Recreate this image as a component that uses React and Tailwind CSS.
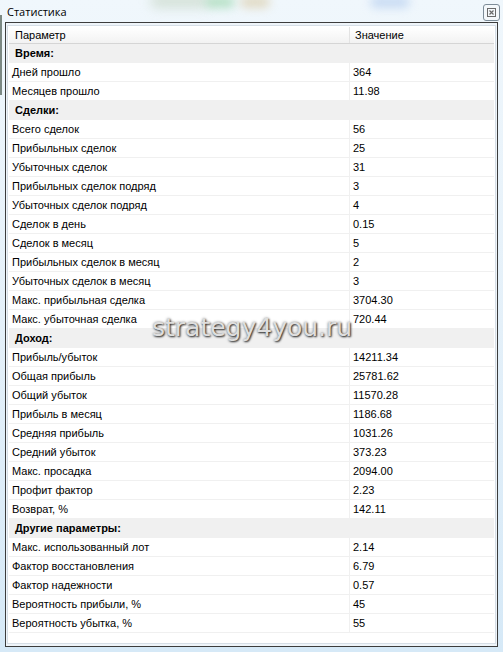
import React from "react";

const sections = [
  {
    title: "Время:",
    rows: [
      ["Дней прошло", "364"],
      ["Месяцев прошло", "11.98"],
    ],
  },
  {
    title: "Сделки:",
    rows: [
      ["Всего сделок", "56"],
      ["Прибыльных сделок", "25"],
      ["Убыточных сделок", "31"],
      ["Прибыльных сделок подряд", "3"],
      ["Убыточных сделок подряд", "4"],
      ["Сделок в день", "0.15"],
      ["Сделок в месяц", "5"],
      ["Прибыльных сделок в месяц", "2"],
      ["Убыточных сделок в месяц", "3"],
      ["Макс. прибыльная сделка", "3704.30"],
      ["Макс. убыточная сделка", "720.44"],
    ],
  },
  {
    title: "Доход:",
    rows: [
      ["Прибыль/убыток", "14211.34"],
      ["Общая прибыль", "25781.62"],
      ["Общий убыток", "11570.28"],
      ["Прибыль в месяц", "1186.68"],
      ["Средняя прибыль", "1031.26"],
      ["Средний убыток", "373.23"],
      ["Макс. просадка", "2094.00"],
      ["Профит фактор", "2.23"],
      ["Возврат, %", "142.11"],
    ],
  },
  {
    title: "Другие параметры:",
    rows: [
      ["Макс. использованный лот", "2.14"],
      ["Фактор восстановления", "6.79"],
      ["Фактор надежности", "0.57"],
      ["Вероятность прибыли, %", "45"],
      ["Вероятность убытка, %", "55"],
    ],
  },
];

function CloseIcon() {
  return (
    <svg width="9" height="9" viewBox="0 0 9 9" fill="none">
      <rect x="0.5" y="0.5" width="8" height="8" stroke="#6a6a6a" strokeWidth="1" />
      <path d="M2.5 2.5 L6.5 6.5 M6.5 2.5 L2.5 6.5" stroke="#6a6a6a" strokeWidth="1.2" />
    </svg>
  );
}

export default function App() {
  return (
    <div
      className="relative w-[503px] h-[652px] overflow-hidden bg-gradient-to-b from-[#f0f7fc] via-[#e4f0f9] to-[#d6e9f7] text-black"
      style={{ fontFamily: '"Liberation Sans", Arial, sans-serif' }}
    >
      {/* blurred background blobs (aero glass) */}
      <div className="pointer-events-none absolute left-[150px] top-[-6px] w-[60px] h-[14px] rounded-full bg-[#c8d8c8] blur-[6px] opacity-70" />
      <div className="pointer-events-none absolute left-[205px] top-[-4px] w-[30px] h-[12px] rounded-full bg-[#9fd8b0] blur-[5px] opacity-70" />
      <div className="pointer-events-none absolute left-[240px] top-[-4px] w-[30px] h-[12px] rounded-full bg-[#d8c8a0] blur-[5px] opacity-60" />
      <div className="pointer-events-none absolute left-[370px] top-[-4px] w-[40px] h-[12px] rounded-full bg-[#b8d0f0] blur-[5px] opacity-70" />
      <div className="pointer-events-none absolute left-[0px] top-[15px] w-[2px] h-[80px] bg-[#4a5a50] opacity-70" />

      {/* title bar */}
      <div className="relative flex h-[22px] items-start justify-between">
        <div
          className="pl-[7px] pt-[4px] text-[11px] leading-[15px] text-black"
          style={{ fontFamily: '"Open Sans", "Noto Sans", sans-serif' }}
        >
          Статистика
        </div>
        <div className="mr-[3px] mt-[4px] flex h-[17px] w-[17px] items-center justify-center rounded-[3px] border border-[#7d8c98] bg-[#f4f8fb]">
          <CloseIcon />
        </div>
      </div>

      {/* panel */}
      <div className="relative mx-[5px] h-[625px] border border-[#3c3c3c] bg-[#eef4f9]">
        <div className="mx-[1px] mt-[2px] h-[619px] border border-[#d6dee6] bg-white">
          <div className="mx-[1px] mt-[1px] flex flex-col">
            {/* header */}
            <div className="flex h-[17px] border-b border-[#d5d5d5] bg-gradient-to-b from-white to-[#f2f2f2] text-[11px] leading-[16px]">
              <div className="w-[341px] border-r border-[#e3e3e3] pl-[6px]">Параметр</div>
              <div className="flex-1 pl-[5px]">Значение</div>
            </div>
            {sections.map((s) => (
              <React.Fragment key={s.title}>
                <div className="flex h-[19px] items-center bg-[#f0f0f0] pl-[6px] text-[11px] font-bold">
                  {s.title}
                </div>
                {s.rows.map(([k, v]) => (
                  <div key={k} className="flex h-[19px] border-b border-[#f0f0f0] text-[11px] leading-[18px]">
                    <div className="w-[341px] border-r border-[#f0f0f0] pl-[3px]">{k}</div>
                    <div className="flex-1 pl-[3px]">{v}</div>
                  </div>
                ))}
              </React.Fragment>
            ))}
          </div>
        </div>
      </div>

      {/* watermark */}
      <div
        className="pointer-events-none absolute left-[152px] top-[313px] text-[25px] leading-[30px] text-[#dedede] [text-shadow:1px_1px_2px_rgba(0,0,0,0.8),0_0_3px_rgba(0,0,0,0.4)]"
        style={{ fontFamily: '"DejaVu Sans", Verdana, sans-serif' }}
      >
        strategy4you.ru
      </div>
    </div>
  );
}
